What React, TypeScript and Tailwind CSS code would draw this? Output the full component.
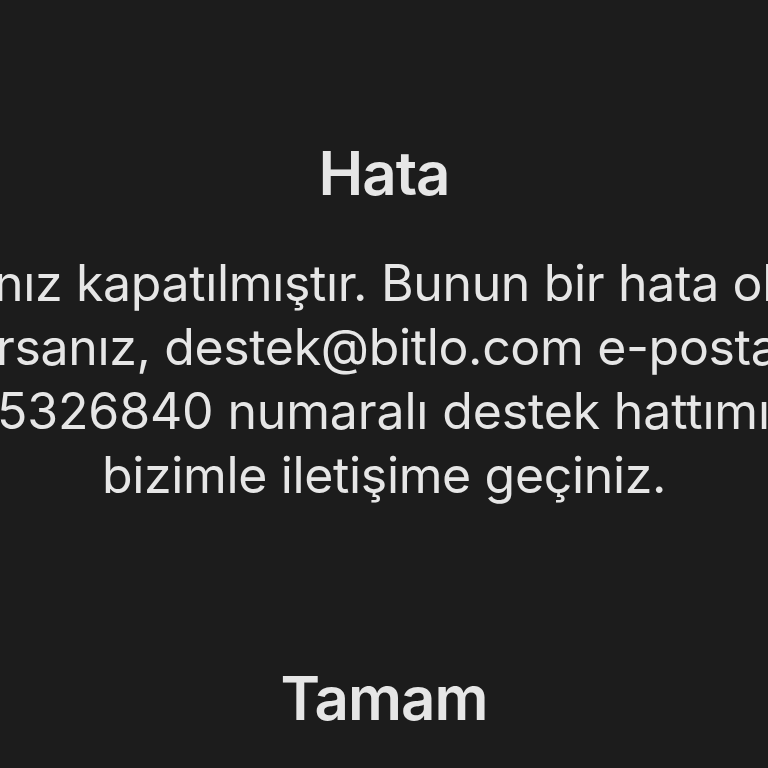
import React from "react";

export default function App() {
  const font = { fontFamily: "Inter, 'Noto Sans', sans-serif" };
  return (
    <div
      className="w-[768px] h-[768px] overflow-hidden bg-[#1c1c1c] text-[#e6e6e6] flex flex-col"
      style={font}
    >
      <div className="pt-[142px] text-center text-[60px] leading-[62px] font-semibold tracking-[-1px]">Hata</div>
      <div className="mt-[47px] text-[50px] leading-[64px] font-normal tracking-[-0.35px]">
        <div className="whitespace-nowrap ml-[-6px]">nız kapatılmıştır. Bunun bir hata olduğunu</div>
        <div className="whitespace-nowrap ml-[-4px]">rsanız, destek@bitlo.com e-posta adresinden</div>
        <div className="whitespace-nowrap ml-[-3px] tracking-[-0.15px]">5326840 numaralı destek hattımızdan</div>
        <div className="whitespace-nowrap text-center">bizimle iletişime geçiniz.</div>
      </div>
      <div className="mt-[160px] text-center text-[60px] leading-[62px] font-semibold tracking-[-1px]">Tamam</div>
    </div>
  );
}
